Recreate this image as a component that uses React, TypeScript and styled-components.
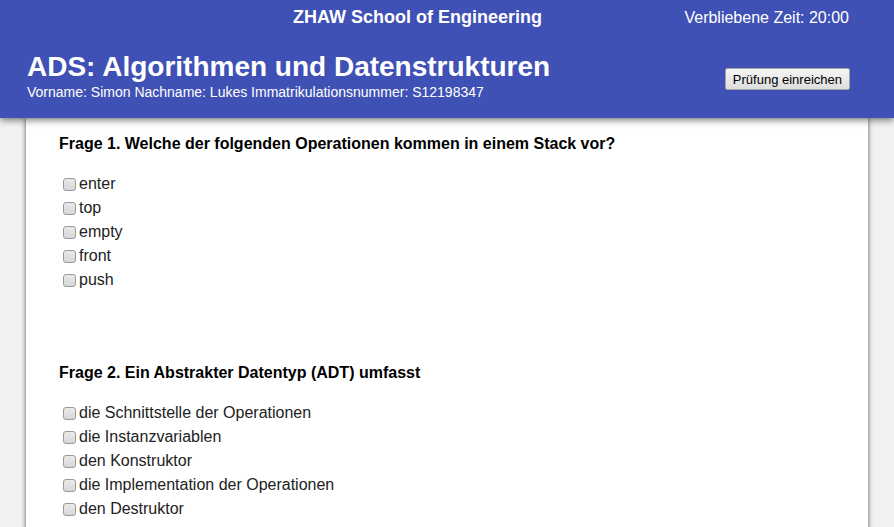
import React from "react";
import styled, { createGlobalStyle } from "styled-components";

type Question = {
  title: string;
  options: string[];
};

const QUESTIONS: Question[] = [
  {
    title: "Frage 1. Welche der folgenden Operationen kommen in einem Stack vor?",
    options: ["enter", "top", "empty", "front", "push"],
  },
  {
    title: "Frage 2. Ein Abstrakter Datentyp (ADT) umfasst",
    options: [
      "die Schnittstelle der Operationen",
      "die Instanzvariablen",
      "den Konstruktor",
      "die Implementation der Operationen",
      "den Destruktor",
    ],
  },
];

const GlobalStyle = createGlobalStyle`
  html, body {
    margin: 0;
    padding: 0;
    background: #f2f2f2;
    font-family: "Liberation Sans", Arial, sans-serif;
    overflow: hidden;
  }
`;

export default function App() {
  return (
    <>
      <GlobalStyle />
      <Header>
        <TopRow>
          <School>ZHAW School of Engineering</School>
          <Timer>Verbliebene Zeit: 20:00</Timer>
        </TopRow>
        <TitleRow>
          <TitleBlock>
            <Title>ADS: Algorithmen und Datenstrukturen</Title>
            <Student>
              Vorname: Simon Nachname: Lukes Immatrikulationsnummer: S12198347
            </Student>
          </TitleBlock>
          <SubmitButton type="button">Prüfung einreichen</SubmitButton>
        </TitleRow>
      </Header>
      <Card>
        {QUESTIONS.map((q) => (
          <QuestionBlock key={q.title}>
            <QuestionTitle>{q.title}</QuestionTitle>
            <Options>
              {q.options.map((opt) => (
                <Option key={opt}>
                  <Check type="checkbox" />
                  {opt}
                </Option>
              ))}
            </Options>
          </QuestionBlock>
        ))}
      </Card>
    </>
  );
}

const Header = styled.header`
  position: relative;
  z-index: 2;
  height: 118px;
  box-sizing: border-box;
  padding: 0 44px 0 27px;
  background: #3f51b5;
  color: #fff;
  box-shadow: 0 2px 7px rgba(0, 0, 0, 0.55);
`;

const TopRow = styled.div`
  display: flex;
  align-items: center;
  justify-content: space-between;
  height: 35px;
  padding: 0 1px 0 266px;
`;

const School = styled.div`
  font-size: 18px;
  font-weight: bold;
`;

const Timer = styled.div`
  font-size: 16px;
`;

const TitleRow = styled.div`
  display: flex;
  align-items: flex-start;
  justify-content: space-between;
  margin-top: 16px;
`;

const TitleBlock = styled.div`
  display: flex;
  flex-direction: column;
`;

const Title = styled.h1`
  margin: 0;
  font-size: 28px;
  line-height: 32px;
  font-weight: bold;
`;

const Student = styled.div`
  margin-top: 1px;
  font-size: 14px;
  line-height: 16px;
`;

const SubmitButton = styled.button`
  margin-top: 17px;
  height: 22px;
  padding: 0 7px;
  font-family: "Liberation Sans", Arial, sans-serif;
  font-size: 13px;
  color: #000;
  background: linear-gradient(#f6f6f6, #dddddd);
  border: 1px solid #a3a3a3;
  border-radius: 2px;
`;

const Card = styled.main`
  position: relative;
  z-index: 1;
  margin: 0 26px;
  min-height: 420px;
  padding: 16px 33px 40px;
  background: #fff;
  box-shadow: 0 0 5px rgba(0, 0, 0, 0.65);
`;

const QuestionBlock = styled.section`
  & + & {
    margin-top: 71px;
  }
`;

const QuestionTitle = styled.h3`
  margin: 0;
  font-size: 16px;
  line-height: 20px;
  font-weight: bold;
  color: #000;
`;

const Options = styled.div`
  display: flex;
  flex-direction: column;
  margin-top: 18px;
`;

const Option = styled.label`
  display: flex;
  align-items: center;
  height: 24px;
  font-size: 16px;
  color: #222;
`;

const Check = styled.input`
  appearance: none;
  width: 13px;
  height: 13px;
  margin: 0 3px 0 4px;
  box-sizing: border-box;
  border: 1px solid #9a9a9a;
  border-radius: 3px;
  background: linear-gradient(#e9e9e9, #d8d8d8);
`;
